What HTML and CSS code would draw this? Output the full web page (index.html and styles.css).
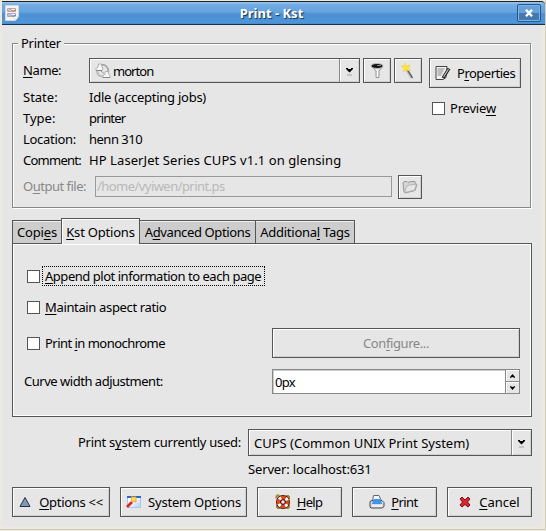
FILE: index.html
```
<!DOCTYPE html>
<html lang="en">
<head>
<meta charset="utf-8">
<title>Print - Kst</title>
<link rel="stylesheet" href="styles.css">
</head>
<body>
<div class="window">
  <header class="titlebar">
    <svg class="app-icon" width="14" height="16" viewBox="0 0 14 16"><path d="M.5.5h13v11l-3 4H.5z" fill="#f5f3f3" stroke="#d8d4d8"/><path d="M2.500 3.500h8v3h-8zM2.500 8.500h8v3h-8z" fill="#fff" stroke="#aaa"/><path d="M3 5.500l2-1 3 1.500 3-1" fill="none" stroke="#d66"/><path d="M3 10h3l2 1 3-1" fill="none" stroke="#77c"/><path d="M10 15.500v-4h3.500z" fill="#fff" stroke="#ccc" stroke-width=".5"/></svg>
    <span class="title">Print - Kst</span>
    <span class="close"><svg width="10" height="8" viewBox="0 0 10 8"><path d="M2 .8l6 6.400M8 .8L2 7.200" stroke="#fff" stroke-width="2.400"/></svg></span>
  </header>
  <main class="content">
    <section class="group">
      <span class="legend">Printer</span>
      <div class="details">
        <div class="row name-row"><span class="label w-name"><u>N</u>ame:</span>
          <div class="combo printer-combo">
            <svg width="16" height="16" viewBox="0 0 16 16"><path d="M6 2.500C10 1 13.500 4 13.500 9M2 7c0 4 2 6.500 6 6.500" fill="none" stroke="#bbb" stroke-width="2"/><path d="M4 6.500l5 4M7 1.500c4 0 6 3 6.500 7" fill="none" stroke="#999"/><path d="M.8 5.500L3 4l.5-3h3L7 4l1 1-1 2.500H1z" fill="#f6f6f6" stroke="#b0b0b0"/><path d="M1 7.500h6" stroke="#888"/><path d="M7.800 12.500l2-1 .5-3h3l.5 3 1.400 1v2H8z" fill="#f6f6f6" stroke="#b0b0b0"/><path d="M8 14.500h7" stroke="#888"/></svg>
            <span class="value w-morton">morton</span><span class="arrow"><svg width="7" height="9" viewBox="0 0 7 9"><path d="M0 1h2v1h3V1h2v1L3.500 5.500 0 2z"/><path d="M1 7h5v2H1z" fill="#c4c4c4"/></svg></span>
          </div>
          <span class="button tool"><svg width="16" height="16" viewBox="0 0 16 16"><path d="M2 3l5 5v6.500h3V8l4-5z" fill="#e8e8e8" stroke="#999"/><ellipse cx="8" cy="3" rx="6" ry="2.500" fill="#111" stroke="#bbb"/><path d="M8 2.500h4" stroke="#888"/><path d="M8.500 8v6" stroke="#fff"/></svg></span>
          <span class="button tool"><svg width="16" height="16" viewBox="0 0 16 16"><path d="M7 7l5 8" stroke="#bbb" stroke-width="3"/><path d="M7.500 7l5 8" stroke="#555" stroke-width="1.300"/><path d="M5 0l1.500 3L10 2 8.500 5l2 3-4-1-3 2 .3-4L1 3l3.500-.3z" fill="#ffe62b" stroke="#f0cf65" stroke-width=".7"/></svg></span>
        </div>
        <div class="row"><span class="label">State:</span><span class="w-state">Idle (accepting jobs)</span></div>
        <div class="row"><span class="label">Type:</span><span class="w-type">printer</span></div>
        <div class="row"><span class="label w-loc">Location:</span><span class="w-henn">henn 310</span></div>
        <div class="row"><span class="label w-com">Comment:</span><span class="w-hp">HP LaserJet Series CUPS v1.1 on glensing</span></div>
        <div class="row output"><span class="label w-out">O<u>u</u>tput file:</span><span class="file">/home/vyiwen/print.ps</span>
          <span class="button browse"><svg width="16" height="14" viewBox="0 0 16 14"><path d="M1 3l1-1.500h3l1 1 3-1 4 0v2l2 1-2 6-10 2.500-1-1z" fill="#d4d4d4" stroke="#999"/><path d="M2.500 12.500l2-6 3-1.500 7-.8-2 6z" fill="#e6e6e6" stroke="#aaa" stroke-width=".8"/></svg></span></div>
      </div>
      <div class="side">
        <span class="button props"><svg width="16" height="16" viewBox="0 0 16 16"><path d="M1 1.500h11l-1 11L8 14.500H1z" fill="#f2f2f2" stroke="#444"/><path d="M2.500 4h7M2.500 6h6M2.500 8h5M2.500 10h4" stroke="#888"/><path d="M14 3.500L8 13" stroke="#222" stroke-width="3.200"/><path d="M13.500 4L8.500 12" stroke="#bbb" stroke-width="1.200"/></svg><span class="w-props">P<u>r</u>operties</span></span>
        <div class="check preview"><i class="box"></i><span class="w-prev">Previe<u>w</u></span></div>
      </div>
    </section>
    <nav class="tabs">
      <span class="tab t1"><span class="w-copies">Copi<u>e</u>s</span></span><span class="tab t2 active"><span class="w-kst"><u>K</u>st Options</span></span><span class="tab t3"><span class="w-adv">A<u>d</u>vanced Options</span></span><span class="tab t4"><span class="w-tags">Additiona<u>l</u> Tags</span></span>
    </nav>
    <section class="panel">
      <div class="check c1"><i class="box"></i><span class="focus w-append"><u>A</u>ppend plot information to each page</span></div>
      <div class="check c2"><i class="box"></i><span class="w-ratio"><u>M</u>aintain aspect ratio</span></div>
      <div class="line c3"><div class="check"><i class="box"></i><span class="w-mono">Print <u>i</u>n monochrome</span></div><span class="button config"><span class="w-conf">Con<u>f</u>igure...</span></span></div>
      <div class="line c4"><span class="w-curve">Curve width adjustment:</span>
        <div class="spin"><span class="px">0px</span><span class="steps"><b><svg width="5" height="4" viewBox="0 0 5 4"><path d="M2.500 0L5 3v1L2.500 3 0 4V3z"/></svg></b><b><svg width="5" height="4" viewBox="0 0 5 4"><path d="M2.500 4L5 1V0L2.500 1 0 0v1z"/></svg></b></span></div></div>
    </section>
    <div class="system"><span class="w-sys">Print s<u>y</u>stem currently used:</span>
      <div class="combo sys-combo"><span class="value w-cups">CUPS (Common UNIX Print System)</span><span class="arrow"><svg width="7" height="9" viewBox="0 0 7 9"><path d="M0 1h2v1h3V1h2v1L3.500 5.500 0 2z"/><path d="M1 7h5v2H1z" fill="#c4c4c4"/></svg></span></div></div>
    <div class="server"><span class="w-serv">Server: localhost:631</span></div>
    <footer class="actions">
      <span class="button b1"><svg width="12" height="12" viewBox="0 0 12 12"><path d="M6 1.500l5 9H1z" fill="#8298b8" stroke="#26303e"/></svg><span class="w-opt"><u>O</u>ptions &lt;&lt;</span></span>
      <span class="button b2"><svg width="16" height="14" viewBox="0 0 16 14"><defs><linearGradient id="win" x2="1" y2="1"><stop offset=".3" stop-color="#fff"/><stop offset="1" stop-color="#b4d0fa"/></linearGradient></defs><path d="M1.500 1.500h13v11h-13z" fill="url(#win)" stroke="#a9c4ee"/><path d="M1 1h14v2H1z" fill="#2865d0"/><path d="M1 12l5-5" stroke="#d22" stroke-width="2.600"/><path d="M5 2l5 0v5l-4-1z" fill="#ffe34b" stroke="#f5a030"/></svg><span class="w-sopt">System Op<u>t</u>ions</span></span>
      <span class="button b3"><svg width="16" height="16" viewBox="0 0 16 16"><path d="M1.500 1.500h3M1.500 1.500v3M14 2v3M14 2h-3M2 14v-3M2 14h3M14 14v-3M14 14h-3" stroke="#9a8c32" stroke-width="2"/><circle cx="8" cy="8" r="4.500" fill="none" stroke="#3a1509" stroke-width="5"/><circle cx="8" cy="8" r="4.500" fill="none" stroke="#e4441e" stroke-width="3.400"/><circle cx="8" cy="8" r="4.500" fill="none" stroke="#fff" stroke-width="3.200" stroke-dasharray="2.400 4.670" stroke-dashoffset="-2.300"/><circle cx="8" cy="8" r="2.200" fill="#eee" stroke="#511"/></svg><span class="w-help"><u>H</u>elp</span></span>
      <span class="button b4"><svg width="16" height="14" viewBox="0 0 16 14"><path d="M3.500 6l1-5.500H10L12.500 6" fill="#f6f8ff" stroke="#667"/><path d="M1 6.500l2-1h10l2 2v4l-2 1.500H2L1 12z" fill="#ddd" stroke="#445"/><path d="M3 8l2-4h6l2 4v1H3z" fill="#4293ef"/><path d="M3 11h10" stroke="#fff"/></svg><span class="w-print"><u>P</u>rint</span></span>
      <span class="button b5"><svg width="12" height="12" viewBox="0 0 12 12"><path d="M3 1l3 3 3-3 2 2-2.500 3L11 9l-2 2-3-2.500L3 11 1 9l2.500-3L1 3z" fill="#dd2430" stroke="#761118"/></svg><span class="w-cancel"><u>C</u>ancel</span></span>
    </footer>
  </main>
</div>
</body>
</html>
```
FILE: styles.css
```
* { box-sizing: border-box; }
body { margin: 0; width: 546px; height: 531px; overflow: hidden; background: #ece9e0; font: 13px/20px "Noto Sans", sans-serif; color: #000; white-space: nowrap; }
svg { display: block; flex: none; }
u { text-decoration: underline; text-underline-offset: 2px; text-decoration-thickness: 1px; text-decoration-skip-ink: none; }
.window { height: 530px; border-right: 1px solid #d5cbb8; border-bottom: 1px solid #d5cbb8; }
.titlebar { display: flex; align-items: center; height: 24px; margin: 1px 0 0 2px; border-top: 1px solid #222; border-bottom: 1px solid #16304e; border-radius: 0 4px 0 0; background: linear-gradient(#9ac8ef 0, #70aae3 3px, #66a4df 10px, #4a90d2 12px, #5095d7 21px, #3474b5 23px); padding-left: 3px; }
.window::before { content: ""; display: table; }
.title { flex: 1; padding-left: 7px; text-align: center; color: #fff; font-weight: 700; text-shadow: 1px 1px 1px #183554; }
.close { display: flex; align-items: center; justify-content: center; width: 24px; height: 18px; margin-right: 4px; border: 1px solid #26588c; border-radius: 2px; background: linear-gradient(#66a2d8 50%, #4379ae 50%); box-shadow: inset 0 0 0 1px #7eb4e5; }
.content { width: 539px; height: 502px; margin-left: 2px; padding: 18px 9px 0 10px; background: #e6e6e6; }
.group { position: relative; display: flex; width: 519px; height: 165px; padding: 14px 0 0 10px; border: 1px solid #888; box-shadow: inset 1px 1px #fff, 1px 1px #fff; }
.legend { position: absolute; left: 5px; top: -11px; padding: 0 3px; background: #e6e6e6; letter-spacing: -.3px; }
.details { width: 406px; }
.row { display: flex; align-items: center; height: 21px; }
.row > span:not(.button):not(.file) { padding-bottom: 2px; }
.label { width: 66px; flex: none; }
.name-row { height: 25px; margin-bottom: 4px; }
.button, .combo { display: flex; align-items: center; justify-content: center; border: 1px solid #555; background: #e6e6e6; box-shadow: inset 1px 1px #fff, inset -1px -1px #d0d0d0; }
.printer-combo { width: 271px; height: 25px; padding-left: 5px; }
.value { flex: 1; }
.printer-combo .value { padding-left: 2px; }
.arrow { display: flex; align-items: center; justify-content: center; align-self: stretch; width: 20px; padding-top: 2px; border-left: 1px solid #888; box-shadow: inset 1px 1px #fff; }
.tool { width: 28px; height: 25px; margin-left: 3px; }
.output { height: 25px; margin-top: 3px; color: #888; }
.row .w-out { width: 72px; }
.file { width: 297px; height: 21px; line-height: 19px; border: 1px solid #999; padding: 0 1px; color: #b8b8b8; letter-spacing: -.55px; }
.browse { width: 24px; height: 24px; margin-left: 6px; }
.button.props { width: 92px; height: 30px; gap: 6px; justify-content: flex-start; padding-left: 5px; }
.check { display: flex; align-items: center; height: 20px; gap: 5px; }
.box { width: 13px; height: 13px; background: #fff; border: 1px solid #555; flex: none; }
.preview { margin: 10px 0 0 3px; }
.tabs { display: flex; align-items: flex-end; height: 26px; margin: 10px 0 -1px; position: relative; }
.tab { display: flex; align-items: center; justify-content: center; height: 24px; margin-right: -1px; border: 1px solid #555; background: #cdcdcd; box-shadow: inset 0 1px #eee; }
.active { height: 26px; border-bottom: 0; background: #e6e6e6; padding-top: 1px; box-shadow: inset 1px 1px #fff; }
.t1 { width: 50px; } .t2 { width: 79px; } .t3 { width: 117px; } .t4 { width: 100px; }
.panel { width: 520px; height: 174px; border: 1px solid #555; box-shadow: inset 1px 1px #fff, inset -1px -1px #fff; padding: 22px 11px 0 14px; }
.c2 { margin-top: 11px; }
.focus { width: 223px; height: 20px; padding: 0 2px; margin-left: -3px; border: 1px dotted #000; line-height: 18px; }
.line { display: flex; align-items: center; justify-content: space-between; }
.c3 { margin-top: 11px; height: 30px; }
.config { width: 248px; height: 30px; color: #888; }
.c4 { height: 25px; margin: 11px 0 0 -3px; }
.spin { display: flex; width: 248px; height: 25px; border: 1px solid #888; background: #fff; box-shadow: inset 1px 1px #ccc; }
.px { flex: 1; padding: 2px; letter-spacing: -.7px; }
.steps { width: 14px; border-left: 1px solid #888; }
.steps b { display: flex; align-items: center; justify-content: center; height: 11px; background: #e6e6e6; box-shadow: inset 1px 1px #fff; }
.steps b + b { height: 12px; border-top: 1px solid #888; }
.system { display: flex; align-items: center; justify-content: flex-end; height: 27px; margin-top: 12px; }
.system > span { width: 170px; padding-bottom: 1px; }
.sys-combo { width: 284px; height: 27px; padding-left: 5px; }
.server { height: 20px; margin: 3px 0 8px 236px; }
.actions { display: flex; gap: 10px; }
.actions .button { height: 30px; gap: 8px; }
.b1 { width: 98px; } .b2 { width: 127px; } .b3, .b4, .b5 { width: 85px; }
.actions .b2 { gap: 6px; }
.actions .b3, .actions .b4 { gap: 6px; padding-right: 2px; }

/* text tracking */
.w-name { letter-spacing: -.4px; }
.w-morton { letter-spacing: -.95px; }
.w-state { letter-spacing: -.25px; }
.w-type { letter-spacing: -.85px; }
.w-loc { letter-spacing: -.3px; }
.w-henn { letter-spacing: -.5px; }
.w-com { letter-spacing: -.75px; }
.w-hp { letter-spacing: .08px; }
.w-out { letter-spacing: -.5px; }
.w-props { letter-spacing: -.5px; }
.w-prev { letter-spacing: -.2px; }
.w-copies { letter-spacing: -.2px; }
.w-kst { letter-spacing: -.2px; }
.w-adv { letter-spacing: -.37px; }
.w-tags { letter-spacing: -.25px; }
.w-append { letter-spacing: -.47px; }
.w-ratio { letter-spacing: -.35px; }
.w-mono { letter-spacing: -.53px; }
.w-curve { letter-spacing: -.48px; padding-bottom: 2px; }
.w-conf { letter-spacing: -.4px; }
.w-sys { letter-spacing: -.27px; }
.w-serv { letter-spacing: -.15px; }
.w-opt { letter-spacing: -.3px; }
.w-sopt { letter-spacing: -.22px; }
.w-print { letter-spacing: -.6px; }
.w-help { letter-spacing: -.7px; }
```
